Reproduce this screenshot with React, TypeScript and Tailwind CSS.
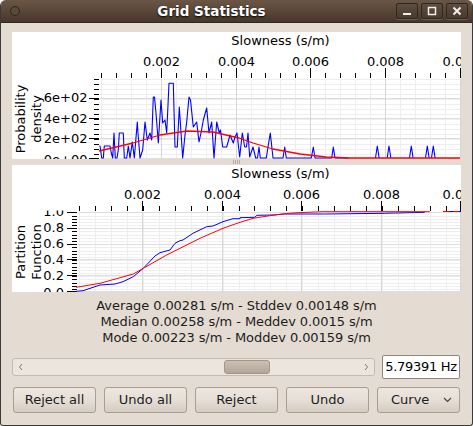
import React from "react";

type YTick = { y: number; label: string; ly: number };

type PlotProps = {
  top: number;
  xMajor: number[];
  xStep: number;
  xStart: number;
  axisX: number;
  labelRight: number;
  tickY: number;
  titleY: number;
  labelY: number;
  yMajor: YTick[];
  yMinor: number[];
  ylabels: string[];
  children?: React.ReactNode;
};

const xLabels = ["0.002", "0.004", "0.006", "0.008", "0.01"];

function range(start: number, end: number, step: number) {
  const out: number[] = [];
  for (let v = start; v <= end + 0.01; v += step) out.push(v);
  return out;
}

function Plot({ top, xMajor, xStep, xStart, axisX, labelRight, tickY, titleY, labelY, yMajor, yMinor, ylabels, children }: PlotProps) {
  const xMinor = range(xStart, 461, xStep);
  const bottom = top + 127;
  const clipId = `ylabels-${top}`;
  return (
    <svg
      className="block bg-white"
      width={449}
      height={127}
      viewBox={`12 ${top} 449 127`}
      fontFamily="'DejaVu Sans', sans-serif"
      fontSize={13}
    >
      <defs>
        <clipPath id={clipId}>
          <rect x={12} y={tickY - 0.5} width={90} height={bottom - tickY + 1} />
        </clipPath>
      </defs>
      {/* grid */}
      <g shapeRendering="crispEdges" strokeWidth={1}>
        {xMinor.map((x) => (
          <line key={x} x1={x} x2={x} y1={tickY + 1} y2={bottom} stroke="#eeeeee" />
        ))}
        {yMinor.map((y) => (
          <line key={y} x1={axisX} x2={461} y1={y} y2={y} stroke="#eeeeee" />
        ))}
        {yMajor.map((t) => (
          <line key={t.y} x1={axisX} x2={461} y1={t.y} y2={t.y} stroke="#dedede" />
        ))}
        {xMajor.map((x) => (
          <line key={x} x1={x} x2={x} y1={tickY + 1} y2={bottom} stroke="#d6d6d6" />
        ))}
        {/* ticks */}
        {xMinor.map((x) => (
          <line key={x} x1={x} x2={x} y1={tickY - 5} y2={tickY} stroke="#000" />
        ))}
        {xMajor.map((x) => (
          <line key={x} x1={x} x2={x} y1={tickY - 10} y2={tickY} stroke="#000" />
        ))}
        {yMinor.map((y) => (
          <line key={y} x1={axisX - 6} x2={axisX - 1} y1={y} y2={y} stroke="#000" />
        ))}
        {yMajor.map((t) => (
          <line key={t.y} x1={axisX - 11} x2={axisX - 1} y1={t.y} y2={t.y} stroke="#000" />
        ))}
      </g>

      {children}

      <text x={280.5} y={titleY} textAnchor="middle" fill="#000">
        Slowness (s/m)
      </text>
      {xMajor.map((x, i) => (
        <text key={x} x={x} y={labelY} textAnchor={i === 4 ? "start" : "middle"} dx={i === 4 ? -18 : 0} fill="#000">
          {xLabels[i]}
        </text>
      ))}
      <g clipPath={`url(#${clipId})`}>
        {yMajor.map((t) => (
          <text key={t.label} x={labelRight} y={t.ly} textAnchor="end" fill="#000">
            {t.label}
          </text>
        ))}
      </g>
      {ylabels.map((l, i) => (
        <text
          key={l}
          textAnchor="middle"
          fill="#000"
          transform={`translate(${25 + i * 16} ${top === 32 ? 119 : 252}) rotate(-90)`}
        >
          {l}
        </text>
      ))}
    </svg>
  );
}

// traced off the histogram, page coordinates
const histLine =
  "99.3,146 100,146 101.7,158 103.3,158 104.3,146 110,146 111.3,153 112.7,158 114,133 115.3,158 117,158 118.3,150 " +
  "119.3,133 123.3,133 124.3,158 126.7,158 128.3,146 130,158 132.3,142 134.3,158 137.3,122 138,133 140,158 142.7,150 " +
  "145,122 147.3,140 150,133 151.7,140 153.3,97 154.5,97 156,113 158.3,143 161,100 162.7,123 165,120 166.7,133 " +
  "169,83.3 173.3,83.3 175,147 177.3,147 179.3,107 182.7,158 185,135 186.7,122 189,97 190.5,100 193.3,127 196.7,122 " +
  "199,142 201,133 203.3,120 206.7,108 209,133 211.7,122 214,158 216.7,122 219.3,133 220.5,130 222.7,147 226.7,147 " +
  "230,135 233.3,143 235,137 237,133 239.7,157 242.3,133 244.7,147 246.5,147 248,133 249.7,157 253,147 " +
  "255.7,158 257.5,158 259,147 260.3,158 266.3,158 268,147 270.3,133 273,158 283,158 284.7,147 286.3,158 " +
  "311.3,158 313.3,147 315,158 331.7,158 333.3,147 335,158 348.7,158";

const redTop = "99,151 133,143 160,135 187,131 213,132 239,138 253,143 273,149 300,154 326,157 349,158 460,158";

const blueBottom =
  "76,291.3 83,290.7 100,285 115,284 123,281.7 133.3,276.7 143.3,268.3 155,256 160,252.7 170,250 175,243.3 180,240.7 183,240 193,233.3 206.7,226.7 213,226 223,221.7 233,218.7 240,218.7 240,217.7 254.7,217.3 257,215.3 273,215 284.7,214 324.7,214 384.7,213.3 424.7,212.3";

const redBottom =
  "76,287.3 100,283.3 133.3,274 143.3,268.3 166.7,255 200,238.3 223,228.3 240,222.3 253,218.3 269.7,215.7 284.7,213.7 298,212.7 323,211.7 429.7,211.7";

function Hist() {
  const spikes = [377.3, 389, 411.3, 427.3, 433.3];
  return (
    <g fill="none" strokeLinejoin="round">
      <polyline points={histLine} stroke="#0000ff" strokeWidth={1.1} />
      {spikes.map((x) => (
        <polyline key={x} points={`${x - 1.8},158 ${x},146 ${x + 1.8},158`} stroke="#0000ff" strokeWidth={1.1} />
      ))}
      <polyline points={redTop} stroke="#ff0000" strokeWidth={1.3} />
    </g>
  );
}

function Cumul() {
  return (
    <g fill="none" strokeLinejoin="round">
      <polyline points={blueBottom} stroke="#0000ff" strokeWidth={1} />
      <polyline points={redBottom} stroke="#ff0000" strokeWidth={1} />
      <line x1={443} x2={450} y1={211.5} y2={211.5} stroke="#ff0000" />
      <line x1={453} x2={459} y1={211.5} y2={211.5} stroke="#ff0000" />
      <line x1={450} x2={453} y1={211.5} y2={211.5} stroke="#0000ff" />
      <line x1={459} x2={461} y1={211.5} y2={211.5} stroke="#0000ff" />
    </g>
  );
}

function WinButton({ children }: { children: React.ReactNode }) {
  return (
    <div className="w-[22px] h-[16px] rounded-[2px] border border-[#2f2720] bg-gradient-to-b from-[#5e4e41] to-[#483a2f] flex items-center justify-center shadow-[0_1px_0_#6d5d50]">
      {children}
    </div>
  );
}

function Btn({ label }: { label: string }) {
  return (
    <button className="w-[83px] h-[26px] rounded-[3px] border border-[#a89e92] bg-gradient-to-b from-[#ece6df] via-[#e6dfd7] to-[#d5ccc2] text-[13px] text-[#1c1c1c] flex items-center justify-center">
      {label}
    </button>
  );
}

export default function App() {
  const topMajor = [161.5, 236.5, 310.5, 385.5, 460.5];
  const botMajor = [142.5, 222.5, 301.5, 381.5, 460.5];
  return (
    <div className="w-[473px] h-[426px] overflow-hidden flex flex-col bg-[#e4dcd3] text-[13px] text-[#1c1c1c] font-['DejaVu_Sans',sans-serif] rounded-t-[6px] border-x border-b border-[#3a3a3a] rounded-b-[3px]">
      {/* title bar */}
      <div className="h-[23px] shrink-0 -mx-px flex items-center bg-gradient-to-b from-[#6a5647] via-[#594738] to-[#46372b] border-b border-[#2f2720] pl-[10px] pr-[5px]">
        <div className="w-[10px] h-[10px] rounded-full border border-[#2f2720] bg-[#5a4a3d]" />
        <div className="flex-1 text-center text-[13.5px] font-bold text-white pl-[7px] [text-shadow:0_1px_2px_#000]">
          Grid Statistics
        </div>
        <div className="flex gap-[3px]">
          <WinButton>
            <svg width="10" height="10" viewBox="0 0 10 10"><rect x="1" y="7" width="8" height="2" fill="#f2efe9" /></svg>
          </WinButton>
          <WinButton>
            <svg width="10" height="10" viewBox="0 0 10 10"><rect x="1.5" y="1.5" width="7" height="7" fill="none" stroke="#f2efe9" strokeWidth="1.5" /></svg>
          </WinButton>
          <WinButton>
            <svg width="10" height="10" viewBox="0 0 10 10"><path d="M1.5 1.5l7 7m0-7l-7 7" stroke="#f2efe9" strokeWidth="2" /></svg>
          </WinButton>
        </div>
      </div>

      <div className="flex-1 flex flex-col pl-[11px] pt-[9px]">
        <Plot
          top={32}
          xMajor={topMajor}
          xStep={14.95}
          xStart={101.5}
          axisX={100}
          labelRight={87.5}
          tickY={78}
          titleY={45}
          labelY={66}
          yMajor={[
            { y: 98.5, label: "6e+02", ly: 102 },
            { y: 118.5, label: "4e+02", ly: 122.5 },
            { y: 138.5, label: "2e+02", ly: 143 },
            { y: 158.5, label: "0e+00", ly: 164 },
          ]}
          yMinor={range(79.5, 155, 5).filter((y) => (y - 98.5) % 20 !== 0)}
          ylabels={["Probability", "density"]}
        >
          <Hist />
        </Plot>

        {/* splitter */}
        <div className="h-[6px] w-[449px] flex items-center justify-center gap-px">
          {[0, 1, 2, 3].map((i) => (
            <div key={i} className="w-px h-[4px] bg-[#b5aca1]" />
          ))}
        </div>

        <Plot
          top={165}
          xMajor={botMajor}
          xStep={15.95}
          xStart={79.5}
          axisX={78}
          labelRight={64}
          tickY={211}
          titleY={178}
          labelY={199}
          yMajor={[
            { y: 212.5, label: "1.0", ly: 216 },
            { y: 228.5, label: "0.8", ly: 232 },
            { y: 244.5, label: "0.6", ly: 248 },
            { y: 259.5, label: "0.4", ly: 264 },
            { y: 275.5, label: "0.2", ly: 280 },
            { y: 291.5, label: "0.0", ly: 297 },
          ]}
          yMinor={range(215.5, 291, 3.2).map((y) => Math.round(y) + 0.5)}
          ylabels={["Partition", "Function"]}
        >
          <Cumul />
        </Plot>

        {/* stats */}
        <div className="w-[449px] mt-[6px] text-center leading-[16px] tracking-[-0.08px]">
          <div>Average 0.00281 s/m - Stddev 0.00148 s/m</div>
          <div>Median 0.00258 s/m - Meddev 0.0015 s/m</div>
          <div>Mode 0.00223 s/m - Moddev 0.00159 s/m</div>
        </div>

        {/* frequency slider */}
        <div className="w-[449px] mt-[9px] flex items-center gap-[7px]">
          <div className="w-[363px] h-[18px] rounded-[3px] border border-[#c4bbb0] bg-[#ebe5de] flex items-center justify-between px-[5px] relative">
            <svg width="6" height="8" viewBox="0 0 6 8"><path d="M4 1L1.5 4 4 7" fill="none" stroke="#7d756c" /></svg>
            <div className="absolute left-[211px] top-[1px] w-[46px] h-[14px] rounded-[3px] border border-[#a39687] bg-gradient-to-b from-[#cbc0b3] to-[#b3a699]" />
            <svg width="6" height="8" viewBox="0 0 6 8"><path d="M2 1l2.5 3L2 7" fill="none" stroke="#7d756c" /></svg>
          </div>
          <div className="w-[78px] h-[24px] bg-white border border-[#8f867b] rounded-[2px] flex items-center justify-center text-black text-[13px] tracking-[-0.3px]">
            5.79391 Hz
          </div>
        </div>

        {/* buttons */}
        <div className="w-[449px] mt-[8px] pl-px flex gap-[8px]">
          <Btn label="Reject all" />
          <Btn label="Undo all" />
          <Btn label="Reject" />
          <Btn label="Undo" />
          <button className="w-[83px] h-[26px] rounded-[3px] border border-[#a89e92] bg-gradient-to-b from-[#ece6df] via-[#e6dfd7] to-[#d5ccc2] text-[13px] text-[#1c1c1c] flex items-center pl-[13px] pr-[7px] justify-between">
            Curve
            <svg width="9" height="6" viewBox="0 0 9 6"><path d="M1 1l3.5 3.5L8 1" fill="none" stroke="#4a4640" strokeWidth="1.2" /></svg>
          </button>
        </div>
      </div>
    </div>
  );
}
